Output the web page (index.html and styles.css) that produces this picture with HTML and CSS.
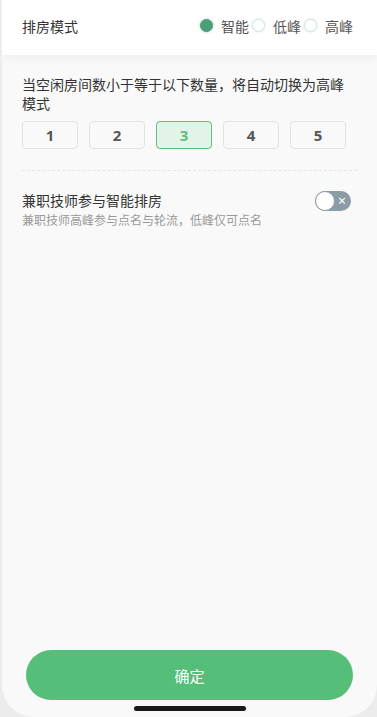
FILE: index.html
```html
<!DOCTYPE html>
<html lang="zh-CN">
<head>
    <meta charset="UTF-8">
    <meta name="viewport" content="width=device-width, initial-scale=1.0">
    <title>排房模式</title>
    <link rel="stylesheet" href="styles.css">
</head>
<body>
    <div class="phone">
        <div class="header">
            <span class="header-title">排房模式</span>
            <div class="radio-group">
                <label class="radio checked"><span class="dot"></span>智能</label>
                <label class="radio"><span class="dot"></span>低峰</label>
                <label class="radio"><span class="dot"></span>高峰</label>
            </div>
        </div>

        <div class="content">
            <p class="desc">当空闲房间数小于等于以下数量，将自动切换为高峰模式</p>
            <div class="num-list">
                <div class="num">1</div>
                <div class="num">2</div>
                <div class="num active">3</div>
                <div class="num">4</div>
                <div class="num">5</div>
            </div>

            <div class="divider"></div>

            <div class="setting">
                <div class="setting-text">
                    <div class="setting-title">兼职技师参与智能排房</div>
                    <div class="setting-sub">兼职技师高峰参与点名与轮流，低峰仅可点名</div>
                </div>
                <div class="switch">
                    <span class="knob"></span>
                    <span class="switch-x">×</span>
                </div>
            </div>
        </div>

        <div class="footer">
            <button class="confirm">确定</button>
            <div class="home-bar"></div>
        </div>
    </div>
</body>
</html>
```

FILE: styles.css
```css
body {
    margin: 0;
    background: #ececec;
    font-family: "Noto Sans", "Noto Sans CJK SC", sans-serif;
    color: #333;
}
.phone {
    margin-left: 2px;
    height: 717px;
    background: #f9f9f9;
    border-radius: 0 0 32px 32px;
    display: flex;
    flex-direction: column;
    overflow: hidden;
}
.header {
    height: 51px;
    flex-shrink: 0;
    background: #fff;
    box-shadow: 0 3px 10px rgba(0, 0, 0, 0.05);
    display: flex;
    align-items: center;
    justify-content: space-between;
    padding: 0 24px 4px 20px;
    font-size: 14px;
}
.header-title {
    color: #333;
}
.radio-group {
    display: flex;
    gap: 2px;
}
.radio {
    display: flex;
    align-items: center;
    color: #555;
}
.dot {
    width: 11px;
    height: 11px;
    border-radius: 50%;
    border: 1px solid #cfe9dc;
    background: #fff;
    box-shadow: 0 0 2px rgba(74, 158, 120, 0.3);
    margin-right: 8px;
    margin-left: 1px;
}
.radio.checked .dot {
    background: #4a9e78;
    border-color: #4a9e78;
    box-shadow: 0 0 3px rgba(74, 158, 120, 0.5);
}
.content {
    flex: 1;
    padding: 0 20px;
}
.desc {
    margin: 20px 0 0;
    font-size: 14px;
    line-height: 19px;
    color: #333;
}
.num-list {
    display: flex;
    gap: 11px;
    margin-top: 8px;
}
.num {
    width: 54px;
    height: 26px;
    border: 1px solid #e2e2e2;
    border-radius: 4px;
    background: #f9f9f9;
    display: flex;
    align-items: center;
    justify-content: center;
    font-weight: bold;
    font-size: 15px;
    color: #555;
}
.num.active {
    background: #e3f3e8;
    border-color: #5cc07a;
    color: #5cc07a;
}
.divider {
    border-top: 1px dashed #e6e6e6;
    margin-top: 21px;
}
.setting {
    display: flex;
    justify-content: space-between;
    align-items: flex-start;
    margin-top: 20px;
}
.setting-title {
    font-size: 14px;
    line-height: 20px;
    color: #333;
}
.setting-sub {
    font-size: 12px;
    line-height: 17px;
    color: #999;
    margin-top: 1px;
}
.switch {
    position: relative;
    width: 36px;
    height: 20px;
    margin-right: 6px;
    border-radius: 10px;
    background: #8c9ca6;
}
.knob {
    position: absolute;
    left: 0;
    top: 0;
    width: 18px;
    height: 18px;
    border-radius: 50%;
    background: #fff;
    border: 1px solid #8c9ca6;
}
.switch-x {
    position: absolute;
    right: 5px;
    top: 0;
    line-height: 19px;
    font-size: 14px;
    color: #fff;
}
.footer {
    display: flex;
    flex-direction: column;
    align-items: center;
    padding: 0 24px 6px 24px;
}
.confirm {
    width: 100%;
    height: 50px;
    border: none;
    border-radius: 25px;
    background: #55bf7a;
    color: #fff;
    font-family: inherit;
    font-size: 15px;
}
.home-bar {
    width: 112px;
    height: 5px;
    border-radius: 3px;
    background: #1a1a1a;
    margin-top: 6px;
}
```
